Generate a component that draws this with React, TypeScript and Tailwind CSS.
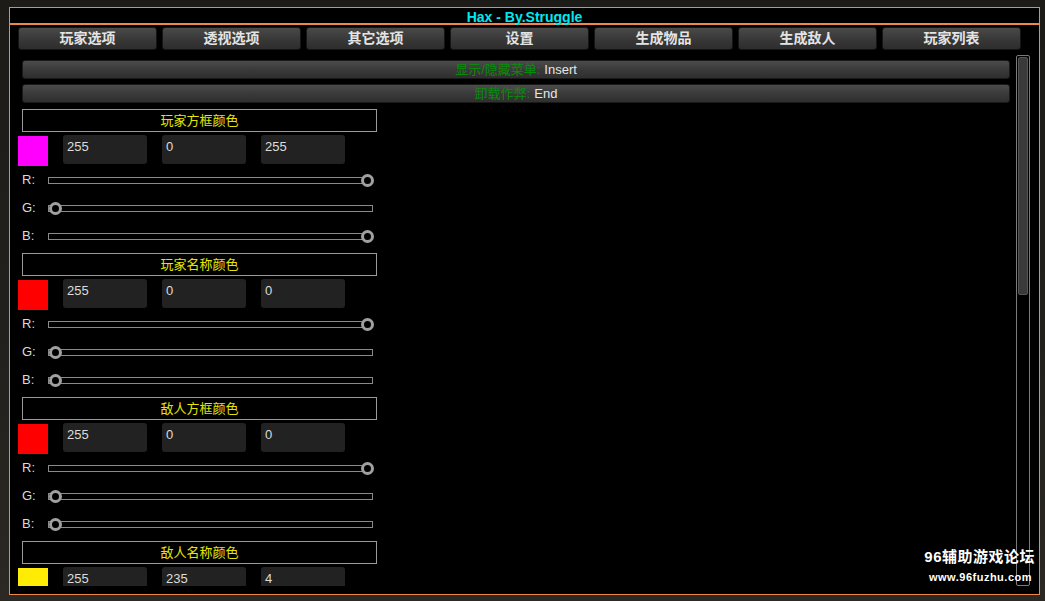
import React from "react";

const CN = { fontFamily: '"Liberation Sans", "Noto Sans CJK SC", sans-serif' };

const tabs = ["玩家选项", "透视选项", "其它选项", "设置", "生成物品", "生成敌人", "玩家列表"];

type Sec = { title: string; color: string; rgb: [number, number, number]; sliders: boolean };
const sections: Sec[] = [
  { title: "玩家方框颜色", color: "#ff00ff", rgb: [255, 0, 255], sliders: true },
  { title: "玩家名称颜色", color: "#ff0000", rgb: [255, 0, 0], sliders: true },
  { title: "敌人方框颜色", color: "#ff0000", rgb: [255, 0, 0], sliders: true },
  { title: "敌人名称颜色", color: "#ffeb04", rgb: [255, 235, 4], sliders: false },
];

function Slider({ label, value }: { label: string; value: number }) {
  const trackW = 325;
  const left = (value / 255) * (trackW - 13);
  return (
    <div className="flex items-center h-[28px]">
      <div className="w-[30px] pl-[4px] text-[13px] text-[#dcdcdc]">{label}</div>
      <div className="relative w-[325px] h-[7px] border border-[#8a8a8a] bg-black">
        <div
          className="absolute top-[-4px] w-[13px] h-[13px] rounded-full border-[3px] border-[#a0a0a0] bg-black"
          style={{ left: left }}
        />
      </div>
    </div>
  );
}

function Section({ s }: { s: Sec }) {
  return (
    <div className="flex flex-col">
      <div className="ml-[4px] w-[355px] h-[23px] border border-[#9a9a9a] flex items-center justify-center text-[13px] text-[#e6e600]">
        {s.title}
      </div>
      <div className="flex items-start mt-[3px] h-[31px]">
        <div className="w-[30px] h-[30px] mt-[1px]" style={{ background: s.color }} />
        <div className="flex gap-[15px] ml-[15px]">
          {s.rgb.map((v, i) => (
            <div
              key={i}
              className="w-[84px] h-[29px] rounded-[3px] bg-[#222222] text-[13px] text-[#dcdcdc] pl-[4px] pt-[2px]"
            >
              {v}
            </div>
          ))}
        </div>
      </div>
      {s.sliders && (
        <>
          <Slider label="R:" value={s.rgb[0]} />
          <Slider label="G:" value={s.rgb[1]} />
          <Slider label="B:" value={s.rgb[2]} />
          <div className="h-[3px]" />
        </>
      )}
    </div>
  );
}

export default function App() {
  return (
    <div
      className="relative w-[1045px] h-[601px] overflow-hidden bg-[linear-gradient(180deg,#1c1b18_0%,#22211d_60%,#2c2823_100%)]"
      style={CN}
    >
      <div className="absolute left-[9px] top-[7px] w-[1031px] h-[588px] border border-[#f0874a] bg-black flex flex-col">
        <div className="h-[15px] flex items-center justify-center border-b-2 border-[#f0874a] box-content">
          <span className="text-[14px] font-bold text-[#00e8f0] leading-none mt-[3px]">Hax - By.Struggle</span>
        </div>
        <div className="flex gap-[5px] pl-[8px] mt-[2px]">
          {tabs.map((t) => (
            <div
              key={t}
              className="w-[139px] h-[23px] rounded-[3px] border border-[#151515] bg-[linear-gradient(180deg,#4a4a4a_0%,#393939_50%,#2d2d2d_100%)] flex items-center justify-center text-[14px] font-bold text-[#e4e4e4]"
            >
              {t}
            </div>
          ))}
        </div>
        <div className="flex mt-[5px] pl-[8px] h-[531px]">
          <div className="flex-1 mr-[6px] overflow-hidden flex flex-col pt-[5px]">
            <div className="ml-[4px] h-[19px] rounded-[3px] border border-[#1a1a1a] bg-[linear-gradient(180deg,#4c4c4c_0%,#3a3a3a_50%,#2f2f2f_100%)] flex items-center justify-center text-[13px]">
              <span className="text-[#0a8a0a]">显示/隐藏菜单:</span>
              <span className="text-[#e6e6e6] ml-[4px]">Insert</span>
            </div>
            <div className="ml-[4px] mt-[5px] h-[19px] rounded-[3px] border border-[#1a1a1a] bg-[linear-gradient(180deg,#4c4c4c_0%,#3a3a3a_50%,#2f2f2f_100%)] flex items-center justify-center text-[13px]">
              <span className="text-[#0a8a0a]">卸载作弊:</span>
              <span className="text-[#e6e6e6] ml-[4px]">End</span>
            </div>
            <div className="mt-[6px] flex flex-col">
              {sections.map((s) => (
                <Section key={s.title} s={s} />
              ))}
            </div>
          </div>
          <div className="w-[14px] h-[531px] border border-[#7a7a7a] rounded-[2px] p-[1px] mr-[9px]">
            <div className="w-full h-[238px] rounded-[2px] border border-[#555] bg-[#3a3a3a]" />
          </div>
        </div>
      </div>
      <div className="absolute right-[10px] top-[548px] flex flex-col items-end">
        <div className="text-[15px] font-bold text-white leading-[18px] tracking-[0.5px]">96辅助游戏论坛</div>
        <div className="text-[11px] font-bold text-white leading-[14px] mt-[4px] mr-[3px] tracking-[0.5px]">www.96fuzhu.com</div>
      </div>
    </div>
  );
}
